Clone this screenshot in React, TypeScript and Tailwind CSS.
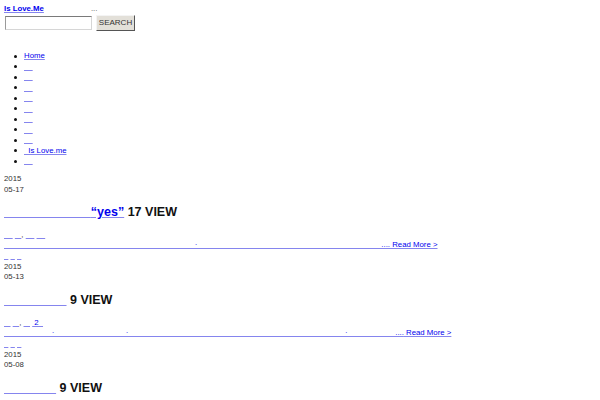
import React from "react";

const sp = (n: number) => "\u00a0".repeat(n);
const link = "text-[#0000ee] underline decoration-[#8585ee]";

function Bullet() {
  return <span className="ml-[10px] mr-[7px] h-[3px] w-[3px] shrink-0 rounded-full bg-[#111]" />;
}

const navItems = ["Home", sp(4), sp(4), sp(4), sp(4), sp(4), sp(4), sp(4), sp(4), sp(2) + "Is Love.me", sp(4)];

type Post = {
  year: string;
  date: string;
  title: React.ReactNode;
  views: string;
  meta: React.ReactNode;
  excerpt: string;
};

const posts: Post[] = [
  {
    year: "2015",
    date: "05-17",
    title: (
      <>
        {sp(25)}“yes”
      </>
    ),
    views: "17 VIEW",
    meta: (
      <>
        <a href="#" className={link}>{sp(4)}</a>{" "}
        <a href="#" className={link}>{sp(3)}</a>,{" "}
        <a href="#" className={link}>{sp(4)}</a>{" "}
        <a href="#" className={link}>{sp(4)}</a>
      </>
    ),
    excerpt: sp(88) + "·" + sp(85) + "....",
  },
  {
    year: "2015",
    date: "05-13",
    title: <>{sp(18)}</>,
    views: "9 VIEW",
    meta: (
      <>
        <a href="#" className={link}>{sp(3)}</a>{" "}
        <a href="#" className={link}>{sp(3)}</a>,{" "}
        <a href="#" className={link}>{sp(3)}</a>{" "}
        <a href="#" className={link}>{sp(1) + "2" + sp(2)}</a>
      </>
    ),
    excerpt: sp(22) + "·" + sp(33) + "·" + sp(100) + "·" + sp(22) + "....",
  },
  {
    year: "2015",
    date: "05-08",
    title: <>{sp(15)}</>,
    views: "9 VIEW",
    meta: (
      <>
        <a href="#" className={link}>{sp(3)}</a>{" "}
        <a href="#" className={link}>{sp(3)}</a>
      </>
    ),
    excerpt: sp(60) + "....",
  },
];

export default function App() {
  return (
    <div className="min-h-[400px] overflow-hidden bg-white pl-[4px] font-['Liberation_Sans',Arial,sans-serif] text-[7.8px] leading-[10.5px] text-[#333]">
      <header className="pt-[3.75px]">
        <div className="flex items-baseline">
          <a href="#" className={`${link} font-bold`}>Is Love.Me</a>
          <span className="ml-[47px] text-[#555]">...</span>
        </div>
        <form className="mt-[0.75px] flex items-center" onSubmit={(e) => e.preventDefault()}>
          <input
            type="text"
            className="ml-px h-[14px] w-[87px] border border-t-[#7a7a7a] border-l-[#9a9a9a] border-r-[#d6d6d6] border-b-[#d6d6d6] bg-white outline-none"
          />
          <button
            type="submit"
            className="ml-[4px] flex h-[16px] w-[39px] items-center justify-center border border-t-[#f4f4f4] border-l-[#f4f4f4] border-r-[#555] border-b-[#555] bg-[#e3e0d9] text-[8px] leading-none text-[#333]"
          >
            SEARCH
          </button>
        </form>
      </header>

      <ul className="mt-[20px]">
        {navItems.map((t, i) => (
          <li key={i} className="flex items-center">
            <Bullet />
            <a href="#" className={link}>{t}</a>
          </li>
        ))}
      </ul>

      <main className="mt-[7.5px]">
        {posts.map((p, i) => (
          <article key={i} className="mb-[0.6px]">
            <div>
              <div>{p.year}</div>
              <div>{p.date}</div>
            </div>
            <h2 className="mt-[10.3px] mb-[10.2px] text-[12.5px] font-bold leading-[14.4px] text-[#111]">
              <a href="#" className={link}>{p.title}</a> {p.views}
            </h2>
            <div>{p.meta}</div>
            <div className="whitespace-nowrap">
              <a href="#" className={link}>
                {p.excerpt} Read More &gt;
              </a>
            </div>
            <div>
              <a href="#" className={link}>{sp(2)}</a>{" "}
              <a href="#" className={link}>{sp(2)}</a>{" "}
              <a href="#" className={link}>{sp(2)}</a>
            </div>
          </article>
        ))}
      </main>
    </div>
  );
}
